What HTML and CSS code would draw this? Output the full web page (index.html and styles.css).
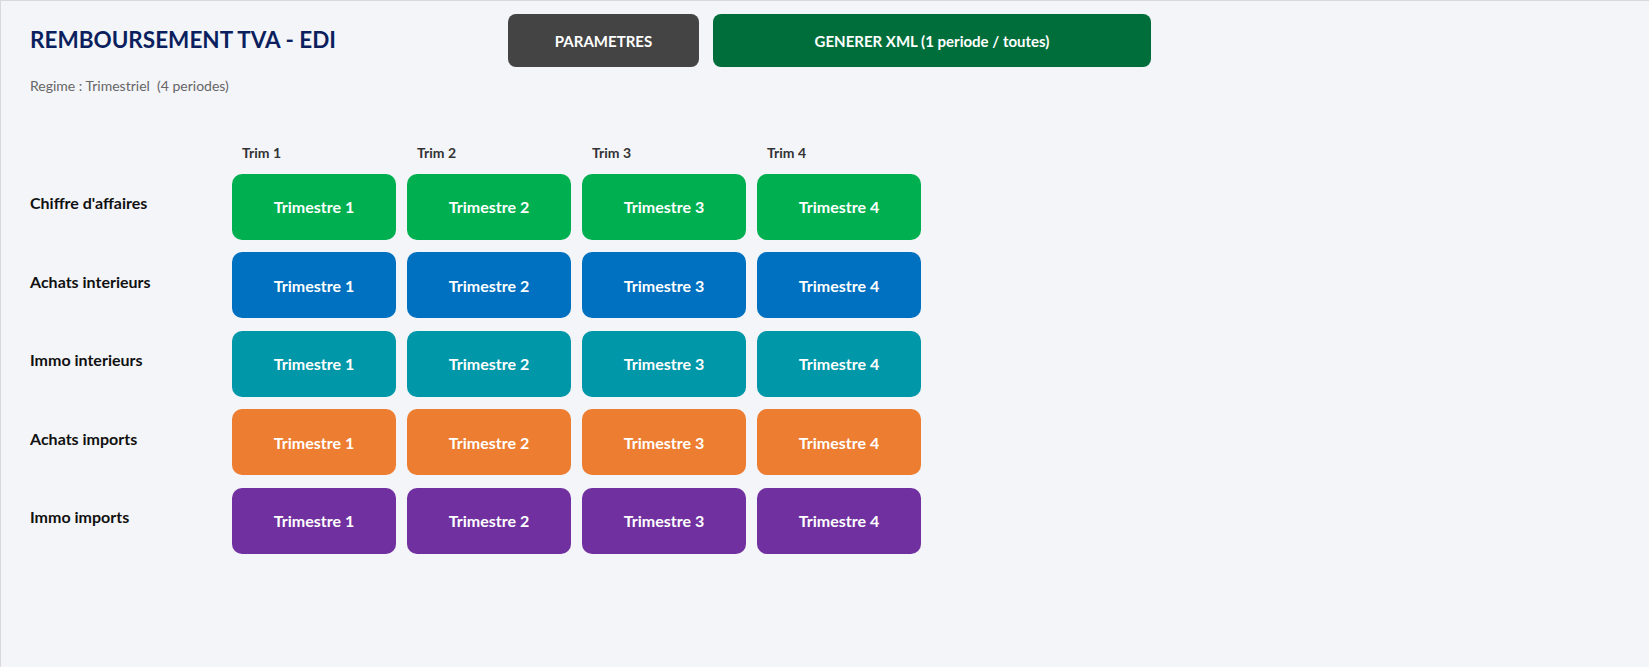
FILE: index.html
```html
<!DOCTYPE html>
<html lang="fr">
<head>
<meta charset="utf-8">
<title>Remboursement TVA - EDI</title>
<link rel="stylesheet" href="styles.css">
</head>
<body>
<div class="page">
  <header class="header">
    <div class="titles">
      <h1 class="title">REMBOURSEMENT TVA - EDI</h1>
      <p class="subtitle">Regime : Trimestriel&nbsp; (4 periodes)</p>
    </div>
    <div class="actions">
      <button class="btn btn-params">PARAMETRES</button>
      <button class="btn btn-xml">GENERER XML (1 periode / toutes)</button>
    </div>
  </header>

  <section class="grid">
    <div class="corner"></div>
    <div class="col-head">Trim 1</div>
    <div class="col-head">Trim 2</div>
    <div class="col-head">Trim 3</div>
    <div class="col-head">Trim 4</div>

    <div class="row-label">Chiffre d'affaires</div>
    <div class="tile tile-green">Trimestre 1</div>
    <div class="tile tile-green">Trimestre 2</div>
    <div class="tile tile-green">Trimestre 3</div>
    <div class="tile tile-green">Trimestre 4</div>

    <div class="row-label">Achats interieurs</div>
    <div class="tile tile-blue">Trimestre 1</div>
    <div class="tile tile-blue">Trimestre 2</div>
    <div class="tile tile-blue">Trimestre 3</div>
    <div class="tile tile-blue">Trimestre 4</div>

    <div class="row-label">Immo interieurs</div>
    <div class="tile tile-teal">Trimestre 1</div>
    <div class="tile tile-teal">Trimestre 2</div>
    <div class="tile tile-teal">Trimestre 3</div>
    <div class="tile tile-teal">Trimestre 4</div>

    <div class="row-label">Achats imports</div>
    <div class="tile tile-orange">Trimestre 1</div>
    <div class="tile tile-orange">Trimestre 2</div>
    <div class="tile tile-orange">Trimestre 3</div>
    <div class="tile tile-orange">Trimestre 4</div>

    <div class="row-label">Immo imports</div>
    <div class="tile tile-purple">Trimestre 1</div>
    <div class="tile tile-purple">Trimestre 2</div>
    <div class="tile tile-purple">Trimestre 3</div>
    <div class="tile tile-purple">Trimestre 4</div>
  </section>
</div>
</body>
</html>
```

FILE: styles.css
```css
* { box-sizing: border-box; }

html, body {
  margin: 0;
  padding: 0;
}

body {
  font-family: Lato, "Open Sans", "Liberation Sans", sans-serif;
  background: #f4f5f9;
}

.page {
  height: 667px;
  border-top: 1px solid #d9d9d9;
  border-left: 1px solid #d9d9d9;
  background: #f4f5f9;
  padding: 13px 0 0 29px;
}

.header {
  display: flex;
  align-items: flex-start;
}

.titles {
  flex: 0 0 478px;
  padding-top: 13px;
}

.title {
  margin: 0;
  font-size: 22.5px;
  line-height: 26px;
  font-weight: 700;
  color: #0b1f5e;
}

.subtitle {
  margin: 24px 0 0;
  font-size: 14px;
  line-height: 18px;
  color: #666666;
}

.actions {
  display: flex;
  gap: 14px;
}

.btn {
  height: 53px;
  border: none;
  border-radius: 8px;
  color: #ffffff;
  font-family: inherit;
  font-size: 15px;
  font-weight: 700;
  cursor: pointer;
}

.btn-params {
  width: 191px;
  background: #444444;
}

.btn-xml {
  width: 438px;
  background: #006e3b;
}

.grid {
  margin-top: 50px;
  display: grid;
  grid-template-columns: 191px repeat(4, 164px);
  grid-template-rows: 16px repeat(5, 66px);
  column-gap: 11px;
  row-gap: 12.5px;
}

.col-head {
  padding-left: 10px;
  font-size: 14px;
  line-height: 16px;
  font-weight: 700;
  color: #333333;
}

.row-label {
  align-self: center;
  padding-bottom: 7px;
  font-size: 16px;
  line-height: 18px;
  font-weight: 700;
  color: #111111;
}

.tile {
  display: flex;
  align-items: center;
  justify-content: center;
  border-radius: 10px;
  color: #ffffff;
  font-size: 16px;
  font-weight: 700;
}

.tile-green { background: #00b050; }
.tile-blue { background: #0070c0; }
.tile-teal { background: #0097a8; }
.tile-orange { background: #ed7d31; }
.tile-purple { background: #7030a0; }
```
